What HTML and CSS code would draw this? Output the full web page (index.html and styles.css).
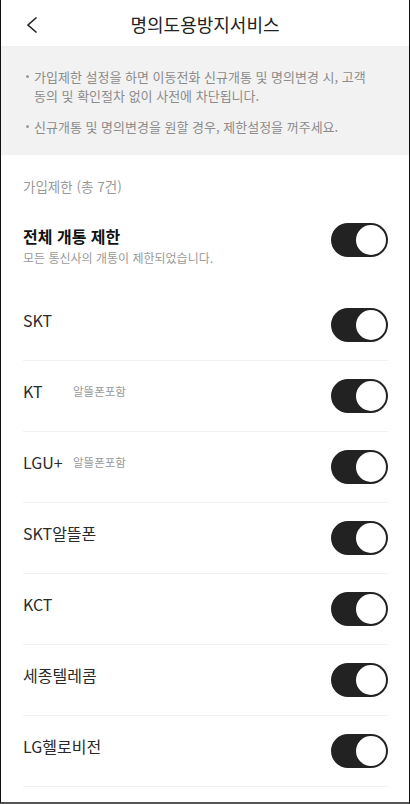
FILE: index.html
```html
<!DOCTYPE html>
<html lang="ko">
<head>
  <meta charset="UTF-8" />
  <meta name="viewport" content="width=device-width, initial-scale=1.0" />
  <title>명의도용방지서비스</title>
  <link rel="stylesheet" href="styles.css">
</head>
<body>
  <div class="screen">
    <header class="topbar">
      <button class="back" aria-label="뒤로">
        <svg width="14" height="18" viewBox="0 0 14 18">
          <path d="M11.5 1.5 L3 9 L11.5 16.5" fill="none" stroke="#222" stroke-width="1.6" />
        </svg>
      </button>
      <h1 class="title">명의도용방지서비스</h1>
    </header>

    <ul class="notice">
      <li>가입제한 설정을 하면 이동전화 신규개통 및 명의변경 시, 고객 동의 및 확인절차 없이 사전에 차단됩니다.</li>
      <li>신규개통 및 명의변경을 원할 경우, 제한설정을 꺼주세요.</li>
    </ul>

    <div class="list">
      <p class="count">가입제한 (총 7건)</p>

      <div class="row row-all">
        <div class="row-text">
          <strong class="all-title">전체 개통 제한</strong>
          <span class="all-sub">모든 통신사의 개통이 제한되었습니다.</span>
        </div>
        <span class="toggle on"></span>
      </div>

      <div class="row">
        <div class="name"><span class="carrier">SKT</span></div>
        <span class="toggle on"></span>
      </div>
      <div class="row">
        <div class="name"><span class="carrier">KT</span><span class="tag">알뜰폰포함</span></div>
        <span class="toggle on"></span>
      </div>
      <div class="row">
        <div class="name"><span class="carrier">LGU+</span><span class="tag">알뜰폰포함</span></div>
        <span class="toggle on"></span>
      </div>
      <div class="row">
        <div class="name"><span class="carrier">SKT알뜰폰</span></div>
        <span class="toggle on"></span>
      </div>
      <div class="row">
        <div class="name"><span class="carrier">KCT</span></div>
        <span class="toggle on"></span>
      </div>
      <div class="row">
        <div class="name"><span class="carrier">세종텔레콤</span></div>
        <span class="toggle on"></span>
      </div>
      <div class="row">
        <div class="name"><span class="carrier">LG헬로비전</span></div>
        <span class="toggle on"></span>
      </div>
    </div>
  </div>
</body>
</html>
```

FILE: styles.css
```css
/* Global */
body {
  margin: 0;
  background: #fff;
  color: #222;
  font-family: "Noto Sans CJK KR", "Noto Sans", sans-serif;
}
/* Phone frame */
.screen {
  height: 804px;
  box-sizing: border-box;
  border-left: 1px solid #111;
  border-right: 1px solid #111;
  border-bottom: 2px solid #555;
  overflow: hidden;
}
/* Top bar */
.topbar {
  height: 46px;
  display: flex;
  align-items: center;
  justify-content: center;
  position: relative;
}
.back {
  position: absolute;
  left: 24px;
  top: 16px;
  padding: 0;
  border: 0;
  background: none;
  width: 14px;
  height: 18px;
}
.back svg {
  display: block;
}
.title {
  margin: 1px 0 0;
  font-size: 18px;
  font-weight: 400;
  color: #222;
}
/* Notice box */
.notice {
  margin: 0;
  list-style: none;
  background: #f2f2f2;
  padding: 21px 30px 17px 33px;
  height: 109px;
  box-sizing: border-box;
}
.notice li {
  position: relative;
  font-size: 13px;
  line-height: 19px;
  color: #8c8c8c;
  margin-bottom: 12px;
}
.notice li:last-child {
  margin-bottom: 0;
}
.notice li::before {
  content: "";
  position: absolute;
  left: -8px;
  top: 8px;
  width: 3px;
  height: 3px;
  border-radius: 50%;
  background: #9a9a9a;
}
/* List */
.list {
  padding: 0 21px 0 22px;
}
.count {
  margin: 0;
  padding-top: 21px;
  font-size: 13.5px;
  line-height: 20px;
  color: #999;
}
.row {
  display: flex;
  align-items: center;
  justify-content: space-between;
  height: 70px;
  border-bottom: 1px solid #f2f2f2;
}
.row-all {
  height: auto;
  align-items: flex-start;
  padding: 27px 0 22px;
  border-bottom: 0;
}
.row-text {
  display: flex;
  flex-direction: column;
  margin-top: 2px;
}
.all-title {
  font-size: 16px;
  font-weight: 700;
  line-height: 22px;
  color: #111;
}
.all-sub {
  font-size: 12px;
  line-height: 21px;
  color: #9a9a9a;
}
.name {
  display: flex;
  align-items: center;
  margin-bottom: 10px;
}
.carrier {
  font-size: 16px;
  line-height: 20px;
  color: #2a2a2a;
  min-width: 50px;
}
.tag {
  font-size: 11.5px;
  color: #9a9a9a;
}
/* Toggle switch */
.toggle {
  position: relative;
  width: 57px;
  height: 34px;
  border-radius: 17px;
  background: #ddd;
  flex-shrink: 0;
}
.toggle.on {
  background: #222;
}
.toggle::after {
  content: "";
  position: absolute;
  top: 2px;
  left: 2px;
  width: 30px;
  height: 30px;
  border-radius: 50%;
  background: #fff;
}
.toggle.on::after {
  left: auto;
  right: 2px;
}
```
